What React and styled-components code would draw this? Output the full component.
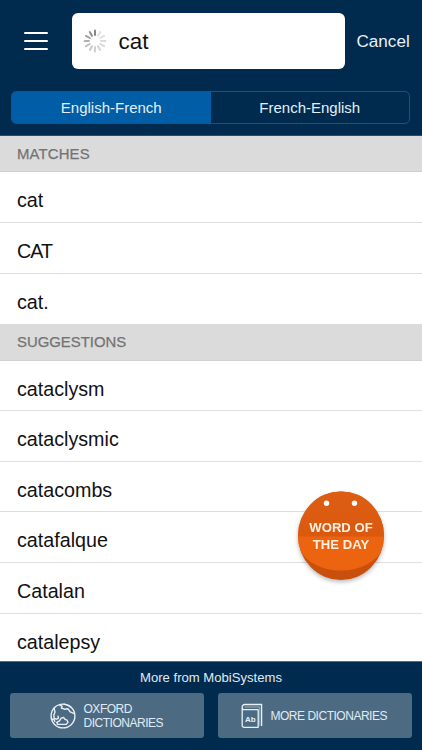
import React from 'react';
import styled, { createGlobalStyle } from 'styled-components';

const GlobalStyle = createGlobalStyle`
  * { box-sizing: border-box; }
  body { margin: 0; background: #002b4e; font-family: "Liberation Sans", Arial, sans-serif; }
`;

const Screen = styled.div`
  width: 422px;
  height: 750px;
  display: flex;
  flex-direction: column;
  overflow: hidden;
  position: relative;
  background: #fff;
`;

const Header = styled.header`
  flex: 0 0 136px;
  background: #002b4e;
  border-bottom: 1px solid #33496a;
`;

const SearchRow = styled.div`
  display: flex;
  align-items: center;
  padding: 13px 0 0 24px;
`;

const MenuButton = styled.button`
  display: flex;
  flex-direction: column;
  gap: 6px;
  width: 24px;
  padding: 0;
  border: 0;
  background: none;
  margin-right: 24px;
`;

const MenuBar = styled.span`
  height: 2px;
  border-radius: 1px;
  background: #fff;
`;

const SearchField = styled.div`
  display: flex;
  align-items: center;
  width: 273px;
  height: 56px;
  padding-left: 11px;
  border-radius: 6px;
  background: #fff;
`;

const Query = styled.span`
  margin: 1px 0 0 11.5px;
  font-size: 22.4px;
  line-height: 26px;
  color: #111;
`;

const Cancel = styled.span`
  margin: 1px 0 0 11.5px;
  font-size: 17.1px;
  color: #e9f1f8;
`;

const Tabs = styled.div`
  display: flex;
  width: 399px;
  height: 33px;
  margin: 22px 0 0 11px;
  border: 1px solid #0059a1;
  border-radius: 5px;
  overflow: hidden;
`;

const Tab = styled.div`
  flex: 1;
  display: flex;
  align-items: center;
  justify-content: center;
  font-size: 15px;
  color: #e3eff9;
  background: ${(p) => (p.$active ? '#005da6' : 'transparent')};
`;

const List = styled.main`
  flex: 1;
  min-height: 0;
  overflow: hidden;
`;

const SectionTitle = styled.div`
  height: 36.4px;
  padding-left: 17px;
  font-size: 14.9px;
  line-height: 37px;
  letter-spacing: ${(p) => p.$tracking || 0}px;
  color: #737373;
  -webkit-text-stroke: 0.25px #737373;
  background: #dbdbdb;
  border-bottom: 1px solid #d0d0d0;
`;

const Entry = styled.div`
  height: 50.6px;
  padding: 3px 0 0 17px;
  font-size: 19.7px;
  line-height: 50px;
  letter-spacing: ${(p) => (p.$tight ? -0.9 : 0)}px;
  color: #111;
  border-bottom: 1px solid ${(p) => (p.$last ? 'transparent' : '#dedede')};
`;

const WordOfDay = styled.div`
  position: absolute;
  left: 298px;
  top: 491px;
  width: 86px;
  height: 89px;
  filter: drop-shadow(0 2px 2px rgba(0, 0, 0, 0.28));
`;

const BadgeText = styled.div`
  position: absolute;
  inset: 28px 0 auto;
  text-align: center;
  font-size: 13.1px;
  font-weight: 700;
  line-height: 17px;
  color: #fff0e2;
`;

const Footer = styled.footer`
  flex: 0 0 89px;
  padding: 8px 10px 0;
  background: #002b4e;
  border-top: 1px solid #526c86;
`;

const FooterTitle = styled.div`
  text-align: center;
  font-size: 13.1px;
  line-height: 15px;
  color: #e0eaf2;
`;

const ButtonRow = styled.div`
  display: flex;
  gap: 14px;
  margin-top: 8px;
`;

const PromoButton = styled.div`
  display: flex;
  align-items: center;
  width: 194px;
  height: 45px;
  padding-left: ${(p) => p.$indent}px;
  gap: 7.5px;
  border-radius: 3px;
  background: #4d6a83;
  color: #e0eaf2;
  font-size: 12px;
  line-height: 14px;
  letter-spacing: ${(p) => p.$tracking || 0}px;
  white-space: nowrap;
`;

const spokes = [0.48, 0.12, 0.12, 0.14, 0.15, 0.17, 0.19, 0.22, 0.26, 0.31, 0.37, 0.43];

const Spinner = () => (
  <svg width="24" height="24" viewBox="-12 -12 24 24">
    {spokes.map((opacity, i) => (
      <line key={i} x1="0" y1="-6" x2="0" y2="-10.4" stroke="#000" strokeOpacity={opacity}
        strokeWidth="2" strokeLinecap="round" transform={`rotate(${i * 30})`} />
    ))}
  </svg>
);

const Globe = () => (
  <svg width="26" height="26" viewBox="0 0 26 26" fill="none" stroke="#e8f0f6" strokeWidth="1.4" strokeLinejoin="round" strokeLinecap="round">
    <circle cx="13" cy="13" r="11.9" />
    <path d="M9.5 1.8 12 3.2 11.4 5 14.4 6.2 18 5.8 20.2 8.8 24.2 10.6" />
    <path d="M14 1.2 18.2 2.4 20.8 4.3" />
    <path d="M4 5.2 5 9 3.8 12.2 4.2 15.5 6.7 16.2 8.5 15.2 8 13.3" />
    <path d="M1.5 16 4 16.4 4.8 18.5" />
    <path d="M7.6 21.4 6.8 19.4 9.5 17.8 11.2 15.1 13.8 14.5 15 16.4 17.1 17.2 18 19.4 16.2 21.4Z" />
  </svg>
);

const Book = () => (
  <svg width="22" height="26" viewBox="0 0 22 26" fill="none" stroke="#e8f0f6" strokeWidth="1.3" strokeLinejoin="round">
    <path d="M1.2 4.4Q1.2 6.6 3.2 6.6H17.2V24.3H3.2Q1.2 24.3 1.2 22.2V4.4Q1.2 1.5 4 1.5H20.6V23" />
    <path d="M3.7 4H18.8V23" strokeWidth=".5" />
    <text x="9.4" y="18.6" fill="#e8f0f6" stroke="none" fontFamily="Liberation Sans" fontSize="8" fontWeight="700" textAnchor="middle" letterSpacing="0">Ab</text>
  </svg>
);

const Calendar = () => (
  <svg width="86" height="89" viewBox="0 0 86 89">
    <defs>
      <clipPath id="disc"><ellipse cx="43" cy="44.75" rx="43" ry="44.25" /></clipPath>
      <linearGradient id="upper" x1="0" y1="0" x2="0" y2="1">
        <stop offset="0" stopColor="#dd5e13" /><stop offset="1" stopColor="#da590e" />
      </linearGradient>
    </defs>
    <g clipPath="url(#disc)">
      <path d="M0 0H86V89H0Z" fill="#c9500c" />
      <path d="M0 44V57Q6 68 19 74.5Q31 80 44 79.5Q57 79.5 69 73.5Q80 67.5 86 57V44Z" fill="#ec6310" />
      <path d="M0 0H86V45.5H0Z" fill="url(#upper)" />
    </g>
    <circle cx="28.5" cy="12.3" r="2.7" fill="#fff" />
    <circle cx="56.5" cy="12.3" r="2.7" fill="#fff" />
  </svg>
);

const matches = ['cat', 'CAT', 'cat.'];
const suggestions = ['cataclysm', 'cataclysmic', 'catacombs', 'catafalque', 'Catalan', 'catalepsy'];

export default function App() {
  return (
    <Screen>
      <GlobalStyle />
      <Header>
        <SearchRow>
          <MenuButton aria-label="Menu"><MenuBar /><MenuBar /><MenuBar /></MenuButton>
          <SearchField><Spinner /><Query>cat</Query></SearchField>
          <Cancel>Cancel</Cancel>
        </SearchRow>
        <Tabs><Tab $active>English-French</Tab><Tab>French-English</Tab></Tabs>
      </Header>
      <List>
        <SectionTitle $tracking={0.15}>MATCHES</SectionTitle>
        {matches.map((w, i) => <Entry key={w} $tight={w === 'CAT'} $last={i === matches.length - 1}>{w}</Entry>)}
        <SectionTitle>SUGGESTIONS</SectionTitle>
        {suggestions.map((w) => <Entry key={w}>{w}</Entry>)}
      </List>
      <Footer>
        <FooterTitle>More from MobiSystems</FooterTitle>
        <ButtonRow>
          <PromoButton $indent={40} $tracking={-0.48}><Globe /><span>OXFORD<br />DICTIONARIES</span></PromoButton>
          <PromoButton $indent={23} $tracking={-0.48}><Book /><span>MORE DICTIONARIES</span></PromoButton>
        </ButtonRow>
      </Footer>
      <WordOfDay><Calendar /><BadgeText>WORD OF<br />THE DAY</BadgeText></WordOfDay>
    </Screen>
  );
}
